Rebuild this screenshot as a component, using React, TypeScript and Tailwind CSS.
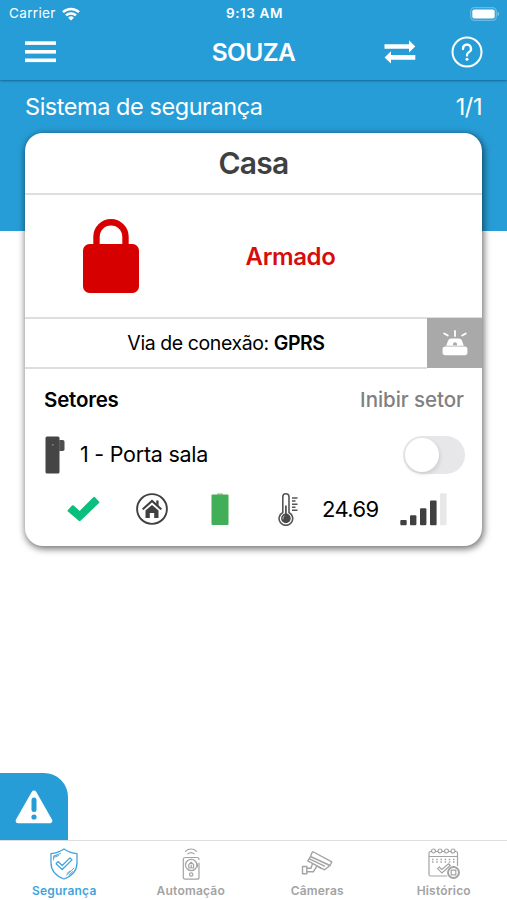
import React, { useState } from 'react';

type IconProps = { className?: string };

const WifiIcon: React.FC = () => (
  <svg width="18" height="14" viewBox="0 0 18 14" fill="none" stroke="white" strokeWidth="2.5">
    <path d="M1 5.2a11.4 11.4 0 0 1 16 0" />
    <path d="M4 8.4a7.2 7.2 0 0 1 10 0" />
    <path d="M9 13.6 6.1 10.7a4.2 4.2 0 0 1 5.8 0Z" fill="white" stroke="none" />
  </svg>
);

const BatteryStatusIcon: React.FC = () => (
  <svg width="30" height="14" viewBox="0 0 30 14">
    <rect x="0.7" y="0.7" width="25.6" height="12.6" rx="3.8" fill="none" stroke="white" strokeOpacity="0.3" strokeWidth="1.3" />
    <rect x="2.3" y="2.4" width="22.4" height="9.2" rx="2" fill="white" />
    <path d="M27.6 4.8c1.6.6 1.6 3.8 0 4.4Z" fill="white" fillOpacity="0.5" />
  </svg>
);

const MenuIcon: React.FC = () => (
  <svg width="31" height="22" viewBox="0 0 31 22" fill="white">
    <rect y="0.3" width="31" height="3.6" />
    <rect y="9" width="31" height="3.6" />
    <rect y="17.5" width="31" height="3.6" />
  </svg>
);

const SwapIcon: React.FC = () => (
  <svg width="32" height="24" viewBox="0 0 32 24" fill="white">
    <path d="M0.5 4.2H25V0.3L31.3 6.4 25 12.4V8.7H0.5Z" />
    <path d="M31.3 15.1H7V11.3L0.5 17.4 7 23.5V19.7H31.3Z" />
  </svg>
);

const HelpIcon: React.FC = () => (
  <svg width="32" height="32" viewBox="0 0 32 32" fill="none" stroke="white">
    <circle cx="16" cy="16" r="14.5" strokeWidth="2" />
    <path d="M12 13V12.7a4 4 0 1 1 5.8 3.5C16.5 17 16 17.7 16 19v.6" strokeWidth="2.3" strokeLinecap="round" />
    <circle cx="16" cy="23.3" r="1.5" fill="white" stroke="none" />
  </svg>
);

const LockIcon: React.FC = () => (
  <svg width="58" height="76" viewBox="0 0 58 76">
    <path d="M14.5 30V18.8a14.5 14.5 0 0 1 29 0V30" fill="none" stroke="#d60000" strokeWidth="6.4" />
    <rect x="1" y="26" width="56" height="49" rx="6.5" fill="#d60000" />
  </svg>
);

const SirenIcon: React.FC = () => (
  <svg width="26" height="26" viewBox="0 0 26 26" fill="white">
    <path d="M13 1v5M2.2 3.4l3.6 2.2M23.8 3.4l-3.6 2.2" stroke="white" strokeWidth="1.8" strokeLinecap="round" />
    <path d="M4.2 15.8 6 10.8Q6.800 8.600 9.300 8.600h7.400q2.500 0 3.300 2.200L21.800 15.800Z" />
    <path d="M11 15.300v-1a2 2 0 0 1 4 0v1Z" fill="#a9a9a9" />
    <rect x="0.6" y="16.4" width="24.8" height="8.8" rx="2.6" />
  </svg>
);

const SensorIcon: React.FC = () => (
  <svg width="20" height="38" viewBox="0 0 20 38">
    <rect x="12" y="4" width="7.5" height="11" rx="1.8" fill="#4d4d4d" />
    <rect x="0.5" y="0.5" width="14" height="37" rx="1.5" fill="#454545" />
    <path d="M14.6 4v11" stroke="#777" strokeWidth="0.6" />
    <circle cx="7.8" cy="8.8" r="0.9" fill="#888" />
  </svg>
);

const CheckIcon: React.FC = () => (
  <svg width="33" height="26" viewBox="0 0 33 26">
    <path d="M0.9 13.9 5 9.6a1.2 1.2 0 0 1 1.7 0L12.6 14.9 26.3 1.3a1.2 1.2 0 0 1 1.7 0L32 5.400a1.200 1.200 0 0 1 0 1.700L13.500 24.800a1.200 1.200 0 0 1-1.700 0L0.900 15.600a1.200 1.200 0 0 1 0-1.700Z" fill="#0abf7e" />
  </svg>
);

const HomeIcon: React.FC = () => (
  <svg width="32" height="32" viewBox="0 0 32 32" fill="none" stroke="#404040">
    <circle cx="16" cy="16" r="14.9" strokeWidth="1.9" />
    <path d="M7.3 15.8 16 8l8.7 7.8" strokeWidth="2.1" strokeLinecap="round" />
    <path d="M20.5 7.800h1.800v4.800l-1.800-1.600Z" fill="#404040" strokeWidth="0.5" />
    <path d="M9.500 17.400 16 11.900l6.500 5.500v7.500h-4.300v-5h-4.400v5H9.500Z" fill="#404040" stroke="none" />
  </svg>
);

const SectorBatteryIcon: React.FC = () => (
  <svg width="18" height="32" viewBox="0 0 18 32">
    <rect x="6" y="0" width="6" height="3" rx="1" fill="#d3cbb4" />
    <rect x="0.5" y="1.5" width="17" height="30.5" rx="1" fill="#40af58" />
  </svg>
);

const ThermometerIcon: React.FC = () => (
  <svg width="21" height="33" viewBox="0 0 21 33" fill="none" stroke="#555">
    <path d="M4.800 19.500V3.900a3.100 3.100 0 0 1 6.200 0v15.600a6.800 6.800 0 1 1-6.200 0Z" strokeWidth="1.6" />
    <path d="M7.900 12.500V22" strokeWidth="1.8" />
    <circle cx="7.9" cy="25.4" r="4.8" fill="#484848" stroke="none" />
    <path d="M4.900 26.300a3.200 3.200 0 0 1 1.600-3.500" stroke="#ccc" strokeWidth="1" />
    <path d="M14 5h5.500M14 8h3.500M14 11.200h5.500M14 14.300h3.500M14 17.300h5.500" strokeWidth="1.4" />
  </svg>
);

const SignalIcon: React.FC = () => (
  <svg width="47" height="33" viewBox="0 0 47 33" fill="#404040">
    <rect x="0.3" y="27" width="6.4" height="5.3" rx="1" />
    <rect x="10" y="22.3" width="6.4" height="10" rx="1" />
    <rect x="20" y="15.2" width="6.4" height="17.1" rx="1" />
    <rect x="30" y="7.6" width="6.6" height="24.7" rx="1" />
    <rect x="40" y="0.3" width="6.6" height="32" rx="1" fill="#e8e8e8" />
  </svg>
);

const AlertIcon: React.FC = () => (
  <svg width="38" height="34" viewBox="0 0 38 34">
    <path d="M19 3 34.8 30.8H3.2Z" fill="white" stroke="white" strokeWidth="5" strokeLinejoin="round" />
    <path d="M19 10v9.5" stroke="#279dd7" strokeWidth="5" strokeLinecap="round" />
    <circle cx="19" cy="27" r="2.6" fill="#279dd7" />
  </svg>
);

const ShieldIcon: React.FC<IconProps> = ({ className }) => (
  <svg className={className} width="32" height="32" viewBox="0 0 32 32" fill="none" stroke="currentColor" strokeWidth="1.3" strokeLinecap="round" strokeLinejoin="round">
    <path d="M16 1c4 2.800 8 4.200 13 4.600v9.200c0 8-5.200 13.300-13 16.200C8.200 28.100 3 22.800 3 14.800V5.600C8 5.200 12 3.800 16 1Z" />
    <path d="m8.300 15.300 1.700-1.700 4.200 3.900 7.800-7.600 2 2-9.800 9.600L8.300 16Z" />
    <path d="M5.600 12V8.200l3-.6M6 7.900l6.500-2.500M5.800 9.500l5-2M18.500 27.200l7.500-7M21 27l3.800-3.500M19 25.500l3-2.500" strokeWidth="0.9" />
  </svg>
);

const RemoteIcon: React.FC<IconProps> = ({ className }) => (
  <svg className={className} width="32" height="32" viewBox="0 0 32 32" fill="none" stroke="currentColor" strokeWidth="1.2" strokeLinecap="round">
    <path d="M10.500 3.300a7.700 7.700 0 0 1 11 0M12.800 5.900a4.500 4.500 0 0 1 6.400 0" />
    <path d="M24 15v14.200q0 2-2 2H10.300q-2 0-2-2V11.500q0-2 2-2H22q2 0 2 2M22.300 16v3" />
    <circle cx="16.2" cy="17" r="5.7" />
    <path d="M13.800 20v-3.500l2.400-2.200 2.400 2.200V20ZM16.200 17v3" />
    <circle cx="16.2" cy="26.5" r="1.7" />
  </svg>
);

const CameraIcon: React.FC<IconProps> = ({ className }) => (
  <svg className={className} width="32" height="32" viewBox="0 0 32 32" fill="none" stroke="currentColor" strokeWidth="1.4" strokeLinejoin="round">
    <path d="M12.500 4 30.800 13.800 29 17.500 9.500 8.500 11 4.800Q11.500 3.700 12.500 4Z" />
    <path d="M9.500 8.500 6.800 12.900 23.500 21.800 29 17.500M8.500 10.800l15.500 7.500" />
    <path d="M11.500 15.600 10 20.200H5.800v3.600h6.500l3.700-6M1.500 18.500h4.300v7.200H1.500Z" />
    <path d="m15 17.500 5 3" />
  </svg>
);

const CalendarIcon: React.FC<IconProps> = ({ className }) => (
  <svg className={className} width="32" height="32" viewBox="0 0 32 32" fill="none" stroke="currentColor" strokeWidth="1.2">
    <path d="M19 28H2.500q-1.500 0-1.500-1.500V5q0-1.500 1.500-1.500H28q1.500 0 1.500 1.500v13M1 8.500h28.500" />
    <g fill="white">
      <circle cx="5.5" cy="3" r="2" />
      <circle cx="12" cy="3" r="2" />
      <circle cx="18.5" cy="3" r="2" />
      <circle cx="25" cy="3" r="2" />
    </g>
    <path d="M4 11.500h23M4 14h23" strokeWidth="1.5" strokeDasharray="1.5 2.7" />
    <path d="m9.500 20.600 1.700-1.600 2.700 2.500 6.600-5.700 1.800 1.700-8.400 7.500Z" />
    <circle cx="25.5" cy="24.5" r="5.5" fill="white" strokeWidth="2" />
    <path d="M23.200 22.200h4.600v4.600h-4.600Z" strokeWidth="1.2" />
  </svg>
);

const tabs = [
  { label: 'Segurança', Icon: ShieldIcon },
  { label: 'Automação', Icon: RemoteIcon },
  { label: 'Câmeras', Icon: CameraIcon },
  { label: 'Histórico', Icon: CalendarIcon },
];

const Header: React.FC = () => (
  <header className="bg-[#279dd7] text-white h-20 shrink-0 shadow-[0_1px_2px_rgba(0,50,90,0.5)] relative z-10">
    <div className="h-[27px] grid grid-cols-3 items-center pl-[9px] pr-[7px] text-[13px] leading-none">
      <div className="flex items-center gap-1.5">
        <span className="pt-px text-[13.5px] tracking-[0.35px]">Carrier</span>
        <WifiIcon />
      </div>
      <span className="text-center font-semibold text-[13.5px] pt-px tracking-[0.6px]">9:13 AM</span>
      <div className="flex justify-end"><BatteryStatusIcon /></div>
    </div>
    <div className="h-[50px] grid grid-cols-3 items-center px-6">
      <button aria-label="Menu" className="justify-self-start pl-px"><MenuIcon /></button>
      <h1 className="text-center text-[24.5px] leading-none font-semibold tracking-[-0.6px]">SOUZA</h1>
      <div className="flex items-center justify-end gap-[35px]">
        <button aria-label="Trocar"><SwapIcon /></button>
        <button aria-label="Ajuda"><HelpIcon /></button>
      </div>
    </div>
  </header>
);

const SectorRow: React.FC = () => {
  const [inhibited, setInhibited] = useState(false);

  return (
    <>
      <div className="flex items-center h-[38px] mt-[22px] pl-[2px]">
        <SensorIcon />
        <span className="ml-[15px] -mt-px text-[21.5px] tracking-[-0.25px]">1 - Porta sala</span>
        <button
          role="switch"
          aria-checked={inhibited}
          aria-label="Inibir setor"
          onClick={() => setInhibited(!inhibited)}
          className={`ml-auto -mr-px w-[62px] h-[38px] rounded-full p-0.5 flex ${inhibited ? 'bg-[#0abf7e] justify-end' : 'bg-[#e7e7e9]'}`}
        >
          <span className="size-[34px] rounded-full bg-white shadow-[1px_2px_4px_rgba(0,0,0,0.12)]" />
        </button>
      </div>
      <div className="flex items-center h-[34px] mt-[18px] pl-[24px]">
        <CheckIcon />
        <span className="ml-[36px]"><HomeIcon /></span>
        <span className="ml-[43px]"><SectorBatteryIcon /></span>
        <span className="ml-[49px]"><ThermometerIcon /></span>
        <span className="ml-[23px] w-[58px] text-[22px] tracking-[-0.6px]">24.69</span>
        <span className="ml-[20px]"><SignalIcon /></span>
      </div>
    </>
  );
};

const SystemCard: React.FC = () => (
  <div className="mx-auto w-[457px] h-[413px] bg-white text-black rounded-[18px] overflow-hidden shadow-[1px_2px_7px_1px_rgba(0,0,0,0.55)]">
    <h2 className="h-[62px] border-b-2 border-[#dedede] text-center text-[30px] leading-[61px] font-semibold tracking-[-0.7px] text-[#404040]">Casa</h2>
    <div className="h-[124px] border-b-2 border-[#dedede] flex items-center">
      <div className="pl-[57px] w-[204px]"><LockIcon /></div>
      <span className="w-[123px] pt-px text-center text-[24px] font-semibold tracking-[-0.4px] text-[#d60d0d]">Armado</span>
    </div>
    <div className="h-[50px] flex">
      <div className="flex-1 border-b-2 border-[#dedede] flex items-center justify-center pt-0.5 text-[19.5px] tracking-[-0.42px]">
        <span>Via de conexão: <b className="font-semibold">GPRS</b></span>
      </div>
      <button aria-label="Sirene" className="w-[55px] -mt-px mb-px bg-[#a9a9a9] flex items-center justify-center"><SirenIcon /></button>
    </div>
    <div className="px-[18px] pt-[17px]">
      <div className="flex justify-between pl-px text-[20.5px] leading-[28px]">
        <span className="font-semibold tracking-[-0.2px]">Setores</span>
        <span className="font-medium tracking-[-0.05px] text-[#808080]">Inibir setor</span>
      </div>
      <SectorRow />
    </div>
  </div>
);

export default function App() {
  const [active, setActive] = useState(0);

  return (
    <div className="w-[507px] h-[900px] bg-white flex flex-col overflow-hidden font-['Inter','Liberation_Sans',sans-serif]">
      <Header />
      <section className="h-[151px] shrink-0 bg-[#279dd7]">
        <div className="h-[53px] px-[25px] flex items-center justify-between text-white text-[23.5px] tracking-[-0.45px]">
          <span>Sistema de segurança</span>
          <span>1/1</span>
        </div>
        <SystemCard />
      </section>
      <div className="flex-1 flex items-end">
        <button aria-label="Alertas" className="w-[68px] h-[67px] bg-[#279dd7] rounded-tr-[24px] flex items-center justify-center">
          <AlertIcon />
        </button>
      </div>
      <nav className="h-[60px] shrink-0 border-t border-[#dddddd] grid grid-cols-4 pl-px">
        {tabs.map(({ label, Icon }, i) => (
          <button
            key={label}
            onClick={() => setActive(i)}
            className={`flex flex-col items-center pt-[7px] ${i === active ? 'text-[#42a5da]' : 'text-[#a3a3a3]'}`}
          >
            <Icon />
            <span className="mt-[3px] text-[12px] leading-[15px] font-semibold tracking-[0.2px]">{label}</span>
          </button>
        ))}
      </nav>
    </div>
  );
}
